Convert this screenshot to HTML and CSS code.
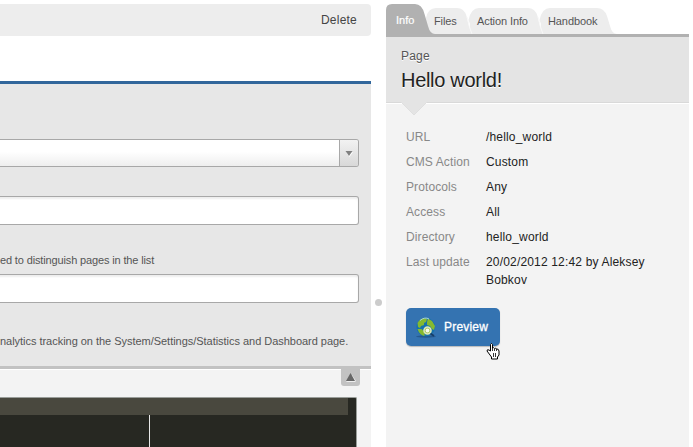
FILE: index.html
```
<!DOCTYPE html>
<html lang="en">
<head>
<meta charset="utf-8">
<title>Hello world!</title>
<link rel="stylesheet" href="styles.css">
</head>
<body>
<div class="layout">
  <main class="editor">
    <div class="toolbar">Delete</div>
    <section class="form">
      <div class="field select"><span class="arrow"><svg width="8" height="7" viewBox="0 0 8 7"><path d="M1 2h7L4.500 7z" fill="#fff"/><path d="M.5 1H7.500L4 6z" fill="#808080"/></svg></span></div>
      <div class="field input"></div>
      <p class="hint first">ed to distinguish pages in the list</p>
      <div class="field input last"></div>
      <p class="hint second">nalytics tracking on the System/Settings/Statistics and Dashboard page.</p>
    </section>
    <section class="code-area">
      <button class="collapse" aria-label="Collapse"><svg width="10" height="9" viewBox="0 0 10 9"><path d="M0 9h9l1-1-4-6z" fill="#eee"/><path d="M0 8L4.500 0 9 8z" fill="#666"/></svg></button>
      <div class="code"><div class="active-line"></div><div class="margin-line"></div></div>
    </section>
  </main>
  <div class="splitter"><i></i></div>
  <aside class="sidebar">
    <nav class="tabs">
      <svg class="tab-shapes" width="303" height="33" viewBox="0 0 303 33">
        <g fill="#ededed">
          <path d="M155 30V20L153.500 16Q156 4 164 4H211Q218 4 221 12L224 22Q226 30 231 30z"/>
          <path d="M84 30V20L82.500 16Q85 4 93 4H142Q149 4 151.500 12L154 22Q156 30 160 30z"/>
          <path d="M40 30V14Q42 4 50 4H71Q78 4 80.500 12L83 22Q85 30 89 30z"/>
        </g>
        <path d="M81 13q2 10 5 17M152 13q2 10 5 17" fill="none" stroke="#f8f8f8"/>
        <path d="M0 33V6Q0 0 6 0H29Q36 0 38.500 10L42 22Q44 30 49 30H303V33z" fill="#b1b1b1"/>
      </svg>
      <a class="tab info">Info</a><a class="tab files">Files</a><a class="tab action">Action Info</a><a class="tab handbook">Handbook</a>
    </nav>
    <header class="page-head">
      <div class="kind">Page</div>
      <h1>Hello world!</h1>
      <svg class="notch" width="28" height="15" viewBox="0 0 28 15"><path d="M1 1l13 13L27 1" fill="#e4e4e4" stroke="#dfdfdf"/><path d="M1 0h26v1H1z" fill="#e4e4e4"/></svg>
    </header>
    <dl class="details">
      <dt>URL</dt><dd>/hello_world</dd>
      <dt>CMS Action</dt><dd>Custom</dd>
      <dt>Protocols</dt><dd>Any</dd>
      <dt>Access</dt><dd>All</dd>
      <dt>Directory</dt><dd>hello_world</dd>
      <dt>Last update</dt><dd>20/02/2012 12:42 by Aleksey Bobkov</dd>
    </dl>
    <a class="preview">
      <svg class="globe" width="21" height="21" viewBox="0 0 21 21">
        <ellipse cx="10" cy="19.500" rx="10" ry="1.200" fill="#24588f"/>
        <circle cx="9.800" cy="10" r="9.300" fill="#1672ad"/>
        <path d="M1.500 6Q4 1.500 8 1l3 1-1 3-2 1 0 2-3 1-1 2-2-1zM12 1.500l4 2.500 3 5-1 4-2-1-2-3-3-1V5zM1.500 12l4 0 3 3 0 4q-5-1-7-7z" fill="#86b92f"/>
        <path d="M4 3.500q5-4 9-1.500" stroke="#a8d4dc" fill="none"/>
        <circle cx="11.500" cy="13.500" r="3.500" fill="#a8c65c" stroke="#dfe9b8" stroke-width="1.600"/>
        <circle cx="11.500" cy="13.500" r="1.900" fill="#f8fbf0"/>
        <path d="M14.500 16.500l3.500 2.500" stroke="#173e68" stroke-width="1.800"/>
      </svg><span>Preview</span>
      <svg class="cursor" width="16" height="17" viewBox="0 0 16 17"><path d="M4.500 1.500Q5.500-.5 6.500 1.500V5q1-1 2 .5 1.300-1 2 .5 2-.5 2.500 2v4l-1.500 2v2h-6v-2L2.500 10 1 8q0-2 2-1l1.500 1z" fill="#fff" stroke="#000"/><path d="M6.500 5v3M8.500 6v2M10.500 6v2M7.500 10v4M9.500 10v4" stroke="#000" stroke-width=".8"/></svg>
    </a>
  </aside>
</div>
</body>
</html>
```
FILE: styles.css
```
* { box-sizing: border-box; }
body { margin: 0; width: 693px; height: 447px; overflow: hidden; background: #fff; font-family: "Liberation Sans", Arial, sans-serif; color: #222; }
.layout { display: grid; grid-template-columns: 371px 15px 303px; height: 447px; }
.editor { padding-top: 4px; min-width: 0; overflow: hidden; }
.toolbar { height: 32px; background: #ededed; border-radius: 0 4px 4px 0; padding: 0 14px; text-align: right; font-size: 12px; line-height: 32px; letter-spacing: .22px; color: #444; }
.form { margin-top: 45px; height: 288px; padding: 55px 12px 0 0; background: #e7e7e7; border-top: 3px solid #31669b; border-bottom: 3px solid #c2c2c2; }
.field { border: 1px solid #a8a8a8; border-left: 0; border-radius: 0 3px 3px 0; background: #fff; }
.select { height: 28px; background: linear-gradient(#fff 45%, #eee); display: flex; justify-content: flex-end; overflow: hidden; }
.arrow { width: 19px; border-left: 1px solid #a8a8a8; background: linear-gradient(#f2f2f2, #d8d8d8); display: flex; align-items: center; justify-content: center; }
.input { height: 29px; margin: 29px 0 0 -5px; box-shadow: inset 0 2px 2px #eee; }
.hint { margin: 0; font-size: 11px; line-height: 14px; color: #555; white-space: nowrap; }
.first { margin-top: 28px; letter-spacing: -.14px; }
.last { margin-top: 7px; }
.second { margin-top: 31px; letter-spacing: -.03px; }
.code-area { position: relative; height: 78px; border-top: 1px solid #fff; background: #f3f3f3; padding: 27px 14px 0 0; }
.collapse { position: absolute; top: -1px; left: 341px; width: 19px; height: 17px; padding: 0; border: 0; border-radius: 0 0 3px 3px; background: #c2c2c2; display: flex; align-items: center; justify-content: center; }
.code { height: 51px; background: #272822; border: 1px solid #999d99; border-width: 1px 1px 0 0; border-radius: 0 2px 0 0; }
.active-line { height: 17px; margin-right: 8px; background: #49483e; }
.margin-line { height: 33px; width: 150px; border-right: 1px solid #e8e8e8; }
.splitter { display: flex; justify-content: center; padding-top: 299px; }
.splitter i { width: 7px; height: 7px; border-radius: 50%; background: #ccc; }
.sidebar { margin-top: 4px; background: #f3f3f3; }
.tabs { position: relative; height: 33px; background: #fff; display: flex; font-size: 11px; line-height: 34px; color: #555; }
.tab-shapes { position: absolute; left: 0; top: 0; }
.tab { position: relative; white-space: nowrap; }
.info { width: 38px; padding-left: 10px; color: #fff; line-height: 32px; -webkit-text-stroke: .2px #fff; }
.files { width: 53px; padding-left: 10px; letter-spacing: -.1px; }
.action { width: 71px; letter-spacing: -.1px; }
.handbook { letter-spacing: -.1px; }
.files, .action, .handbook { color: #555; }
.page-head { position: relative; height: 66px; padding: 10px 15px 0; background: #e4e4e4; border-bottom: 1px solid #d9d9d9; box-shadow: 0 1px #fff; }
.kind { font-size: 12px; line-height: 18px; letter-spacing: .2px; color: #555; text-shadow: 0 1px #fff; }
h1 { margin: 3px 0 0; font-size: 20px; line-height: 24px; font-weight: 400; letter-spacing: -.3px; text-shadow: 0 1px #fff; color: #222; }
.notch { position: absolute; left: 14px; top: 64px; }
.details { display: grid; grid-template-columns: 80px 180px; row-gap: 7px; margin: 25px 0 0 20px; font-size: 12px; line-height: 18px; }
dt { color: #888; letter-spacing: .1px; }
dd { margin: 0; color: #222; letter-spacing: .17px; }
.preview { position: relative; display: flex; align-items: center; width: 94px; height: 38px; margin: 19px 0 0 20px; padding-left: 10px; gap: 7px; border-radius: 5px; background: #3473b1; box-shadow: 0 1px 1px #bbb; color: #fff; font-size: 12px; letter-spacing: .2px; -webkit-text-stroke: .3px #fff; }
.cursor { position: absolute; left: 80px; top: 35px; }
```
